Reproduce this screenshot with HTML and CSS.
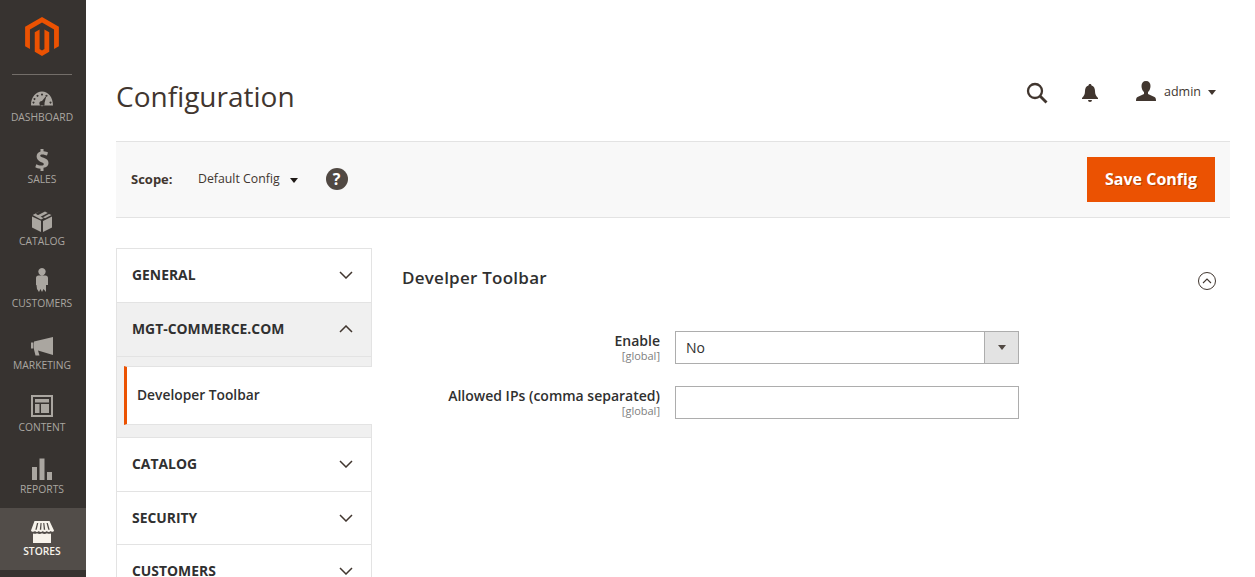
FILE: index.html
```html
<!DOCTYPE html>
<html lang="en">
<head>
<meta charset="utf-8">
<title>Configuration</title>
<link rel="stylesheet" href="styles.css">
</head>
<body>
<div class="app">
  <nav class="side">
    <div class="logo">
      <svg class="logo-svg" viewBox="1.609 0 20.782 24"><path fill="#eb5202" d="M12 24l-4.455-2.572v-12l2.97-1.715v12.001L12 20.57l1.485-.856V7.714l2.97 1.715v12L12 24zM22.391 6v12l-2.969 1.714V7.714L12 3.43 4.574 7.714v12L1.609 18V6L12 0l10.391 6z"/></svg>
    </div>
    <ul class="menu">
      <li class="menu-item">
        <svg class="ico" viewBox="0 0 24 24"><path fill="currentColor" fill-rule="evenodd" d="M1 19C1 11 6 5.500 12 5.500S23 11 23 19.500H1.300zM12 7.500a1 1 0 1 0 .01 0zM7.500 8.700a1 1 0 1 0 .01 0zM16.500 8.700a1 1 0 1 0 .01 0zM4.500 12a1 1 0 1 0 .01 0zM3.500 15.500a1 1 0 1 0 .01 0zM20.500 15.500a1 1 0 1 0 .01 0zM16.500 9.500L12 15a2.600 2.600 0 1 0 2.500 2z"/></svg>
        <span>Dashboard</span>
      </li>
      <li class="menu-item">
        <svg class="ico" viewBox="0 0 24 24"><path fill="currentColor" d="M10.500 1h3v2.300c2 .2 3.400.7 4.500 1.300l-1 3c-1.300-.6-2.900-1.200-4.600-1.200-1.500 0-2.200.5-2.200 1.300 0 .9 1 1.300 3.400 2.100 3.300 1.100 4.900 2.600 4.900 5.100 0 2.500-1.700 4.400-5 4.800V23h-3v-2.200c-2-.1-4-.7-5.200-1.500l1-3.100c1.400.8 3.200 1.400 5 1.400 1.500 0 2.500-.5 2.500-1.500s-.9-1.500-3.100-2.200C8.500 12.800 6.600 11.400 6.600 8.600c0-2.500 1.600-4.400 3.900-5z"/></svg>
        <span>Sales</span>
      </li>
      <li class="menu-item">
        <svg class="ico" viewBox="0 0 24 24"><path transform="translate(0 -1)" fill="currentColor" d="M11 1.500L2.700 6 11 10.600 13.500 9.200 5.600 4.800zM15 2.400L7.300 6.600 10 8.100 17.800 3.900zM19 5l-3.400 1.800-.1.100L13 8.200l2 1 6.500-3.300zM2 7.500v11l9 4.500V11.800zM22 7.500L13 12v11l9-4.500z"/></svg>
        <span>Catalog</span>
      </li>
      <li class="menu-item">
        <svg class="ico" viewBox="0 0 24 24"><path transform="translate(0 -4)" fill="currentColor" d="M12 0a3.700 3.700 0 1 1-.01 0zM8.500 7.500h7c1.500 0 2.500 1 2.500 2.500v7h-2v7l-2.500-3-1.500 3-1.500-3-1.500 3-2-3-.5-4H6v-7c0-1.500 1-2.500 2.500-2.500z"/></svg>
        <span>Customers</span>
      </li>
      <li class="menu-item">
        <svg class="ico" viewBox="0 0 24 24"><path fill="currentColor" d="M23 3v18L8 16.500l1.500 5H5.500L4 15.500V7.500zM1 8.500h2.500v6H1z"/></svg>
        <span>Marketing</span>
      </li>
      <li class="menu-item">
        <svg class="ico" viewBox="0 0 24 24"><path transform="translate(0 -2)" fill="currentColor" fill-rule="evenodd" d="M1 1h22v22H1zM3 3v18h18V3zM5 5h14v3.500H5zM5 10h4.500v9H5zM11 10h8v9h-8z"/></svg>
        <span>Content</span>
      </li>
      <li class="menu-item">
        <svg class="ico" viewBox="0 0 24 24"><path transform="translate(0 -1)" fill="currentColor" d="M2 10h5v13H2zM9.500 1.500h5V23h-5zM17 15h5v8h-5z"/></svg>
        <span>Reports</span>
      </li>
      <li class="menu-item is-active">
        <svg class="ico" viewBox="0 0 24 24"><path fill="currentColor" d="M4.500 1h15L24 10.500c-.2 1.500-2.500 1.800-3.500.5-.8 1.300-2.800 1.300-3.700 0-.8 1.300-3.200 1.300-4 .1-.8 1.200-3.200 1.200-4-.1-.9 1.300-2.900 1.300-3.700 0C4 12.300 1.200 12 1 10.500zM7 3 5.300 9.800h1.400L8.300 3zM10.500 3l-.7 6.800h1.400L11.600 3zM13.200 3l.6 6.800h1.400L14.300 3zM16.500 3l1.800 6.800h1.400L17.800 3zM3 13.500c1.500.6 3 .4 4-.3 1.500 1 3.500 1 5 .1 1.500.9 3.500.9 5-.1 1 .7 2.500.9 4 .3V23H3z"/></svg>
        <span>Stores</span>
      </li>
    </ul>
  </nav>

  <main class="main">
    <header class="top">
      <h1 class="title">Configuration</h1>
      <div class="top-actions">
        <svg class="search" viewBox="0 0 22 22"><circle cx="9" cy="9" r="7" fill="none" stroke="#41362f" stroke-width="2.300"/><path d="M14 14l6.500 6.500" stroke="#41362f" stroke-width="2.800"/></svg>
        <svg class="bell" viewBox="0 0 16 18"><path fill="#41362f" d="M8 0c1 0 1.500.7 1.500 1.500C12 2.300 13 4.500 13 7c0 3.500 1 5 3 7v1H0v-1c2-2 3-3.500 3-7 0-2.500 1-4.700 3.500-5.500C6.500.7 7 0 8 0zM6 16h4a2 2 0 0 1-4 0z"/></svg>
        <div class="user">
          <svg class="user-ico" viewBox="0 0 20 20"><path fill="#41362f" d="M10 0c3 0 4.500 2 4.500 5 0 2.500-1 5-2.500 6v2l6.500 3c1 .5 1.500 1.500 1.500 4H0c0-2.500.5-3.500 1.500-4L8 13v-2C6.500 10 5.500 7.500 5.500 5c0-3 1.500-5 4.500-5z"/></svg>
          <span class="user-name">admin</span>
          <span class="caret caret-user"></span>
        </div>
      </div>
    </header>

    <section class="actions">
      <div class="scope">
        <span class="scope-label">Scope:</span>
        <span class="scope-value">Default Config</span>
        <span class="caret caret-scope"></span>
        <span class="help">?</span>
      </div>
      <button class="save" type="button">Save Config</button>
    </section>

    <div class="columns">
      <aside class="tabs">
        <div class="tab"><span>General</span><svg class="chev" viewBox="0 0 14 8"><path d="M1 1l6 6 6-6" fill="none" stroke="#41362f" stroke-width="1.500"/></svg></div>
        <div class="tab is-open"><span>MGT-Commerce.com</span><svg class="chev" viewBox="0 0 14 8"><path d="M1 7l6-6 6 6" fill="none" stroke="#41362f" stroke-width="1.500"/></svg></div>
        <div class="sub">
          <div class="sub-item">Developer Toolbar</div>
        </div>
        <div class="tab"><span>Catalog</span><svg class="chev" viewBox="0 0 14 8"><path d="M1 1l6 6 6-6" fill="none" stroke="#41362f" stroke-width="1.500"/></svg></div>
        <div class="tab tab-short"><span>Security</span><svg class="chev" viewBox="0 0 14 8"><path d="M1 1l6 6 6-6" fill="none" stroke="#41362f" stroke-width="1.500"/></svg></div>
        <div class="tab"><span>Customers</span><svg class="chev" viewBox="0 0 14 8"><path d="M1 1l6 6 6-6" fill="none" stroke="#41362f" stroke-width="1.500"/></svg></div>
      </aside>

      <section class="panel">
        <div class="panel-head">
          <h2 class="panel-title">Develper Toolbar</h2>
          <svg class="collapse" viewBox="0 0 20 20"><circle cx="10" cy="10" r="8.500" fill="none" stroke="#41362f" stroke-width="1"/><path d="M6 12l4-4 4 4" fill="none" stroke="#41362f" stroke-width="1.100"/></svg>
        </div>
        <div class="row row-first">
          <div class="label"><div class="label-main">Enable</div><div class="label-scope">[global]</div></div>
          <div class="select"><span class="select-text">No</span><span class="select-btn"><span class="caret caret-select"></span></span></div>
        </div>
        <div class="row">
          <div class="label"><div class="label-main">Allowed IPs (comma separated)</div><div class="label-scope">[global]</div></div>
          <input class="input" type="text">
        </div>
      </section>
    </div>
  </main>
</div>
</body>
</html>
```

FILE: styles.css
```css
* { box-sizing: border-box; }
html, body { margin: 0; padding: 0; height: 100%; overflow: hidden; background: #fff; }
body { font-family: "Open Sans", "Liberation Sans", sans-serif; color: #41362f; }

.app { display: flex; height: 577px; overflow: hidden; }

.side { width: 86px; flex: none; background: #373330; color: #aaa6a0; }
.logo { height: 75px; margin: 0 14px 0 12px; border-bottom: 1px solid #736e69; display: flex; justify-content: center; padding-top: 17px; }
.logo-svg { width: 34px; height: 39px; }
.menu { list-style: none; margin: -1px 0 0; padding: 0; }
.menu-item { height: 62px; display: flex; flex-direction: column; align-items: center; padding: 12px 2px 0 0; font-size: 10.3px; line-height: 14px; text-transform: uppercase; }
.ico { width: 24px; height: 24px; display: block; overflow: visible; }
.is-active { background: #524d49; color: #f7f3eb; font-weight: 600; }

.main { flex: 1; min-width: 0; padding: 0 25px 0 30px; }
.top { height: 141px; display: flex; justify-content: space-between; align-items: flex-start; }
.title { margin: 77px 0 0; font-size: 28px; line-height: 38px; font-weight: 400; color: #41362f; }
.top-actions { display: flex; align-items: center; margin-top: 82px; }
.search { width: 22px; height: 22px; margin-right: 34px; }
.bell { width: 16px; height: 18px; margin-right: 38px; }
.user { display: flex; align-items: center; margin: -2px 14px 0 0; }
.user-ico { width: 20px; height: 20px; margin-right: 8px; margin-top: -3px; }
.user-name { font-size: 12.5px; line-height: 18px; margin-top: -1px; }
.caret { display: block; width: 0; height: 0; border-style: solid; border-color: #41362f transparent transparent; }
.caret-user { border-width: 5px 4.500px 0; margin-left: 7px; }

.actions { height: 77px; background: #f8f8f8; border-top: 1px solid #e3e3e3; border-bottom: 1px solid #e3e3e3; display: flex; justify-content: space-between; align-items: center; padding: 0 15px; }
.scope { display: flex; align-items: center; margin-top: -2px; }
.scope-label { font-size: 13px; font-weight: 700; width: 67px; }
.scope-value { font-size: 12.3px; }
.caret-scope { border-width: 5px 4.500px 0; margin: 3px 28px 0 10px; border-top-color: #1f1a17; }
.help { width: 22px; height: 22px; border-radius: 50%; background: #514943; color: #fff; font-size: 16px; font-weight: 700; line-height: 22px; text-align: center; }
.save { width: 128px; height: 45px; background: #eb5202; color: #fff; border: 0; font-family: inherit; font-size: 16px; font-weight: 700; padding: 0 0 2px; text-shadow: 1px 1px 0 rgba(0, 0, 0, .25); }

.columns { display: flex; padding-top: 30px; }
.tabs { width: 256px; flex: none; border: 1px solid #e3e3e3; border-bottom: 0; }
.tab { height: 54px; display: flex; justify-content: space-between; align-items: center; padding: 0 18px 2px 15px; border-bottom: 1px solid #e3e3e3; font-size: 13.9px; font-weight: 700; text-transform: uppercase; color: #303030; }
.tab-short { height: 53px; padding-bottom: 1px; }
.tab.is-open { background: #f0f0f0; }
.chev { width: 14px; height: 8px; }
.sub { background: #f0f0f0; padding: 9px 0 12px 7px; border-bottom: 1px solid #e3e3e3; }
.sub-item { height: 59px; margin-right: -1px; padding-left: 10px; background: #fff; border-left: 3px solid #eb5202; border-top: 1px solid #e3e3e3; border-bottom: 1px solid #e3e3e3; font-size: 13.8px; font-weight: 600; line-height: 56px; color: #303030; }

.panel { flex: 1; min-width: 0; padding-left: 30px; }
.panel-head { display: flex; justify-content: space-between; align-items: center; height: 58px; padding-right: 13px; }
.panel-title { margin: 0; font-size: 17px; font-weight: 600; letter-spacing: .25px; color: #303030; }
.collapse { width: 20px; height: 20px; margin-top: 8px; }
.row { display: flex; align-items: flex-start; margin-top: 22px; }
.row-first { margin-top: 25px; }
.label { width: 258px; margin-right: 15px; padding-top: 1px; text-align: right; }
.label-main { font-size: 14px; font-weight: 600; line-height: 18px; color: #303030; }
.label-scope { font-size: 11px; line-height: 13px; margin-top: -1px; color: #808080; }
.select { width: 344px; height: 33px; border: 1px solid #adadad; display: flex; justify-content: space-between; align-items: stretch; }
.select-text { font-size: 14px; line-height: 31px; padding-left: 10px; color: #303030; }
.select-btn { width: 34px; background: #e3e3e3; border-left: 1px solid #adadad; display: flex; align-items: center; justify-content: center; }
.caret-select { border-width: 5px 4px 0; border-top-color: #514943; }
.input { width: 344px; height: 33px; border: 1px solid #adadad; background: #fff; padding: 0; margin: 0; display: block; }
```
